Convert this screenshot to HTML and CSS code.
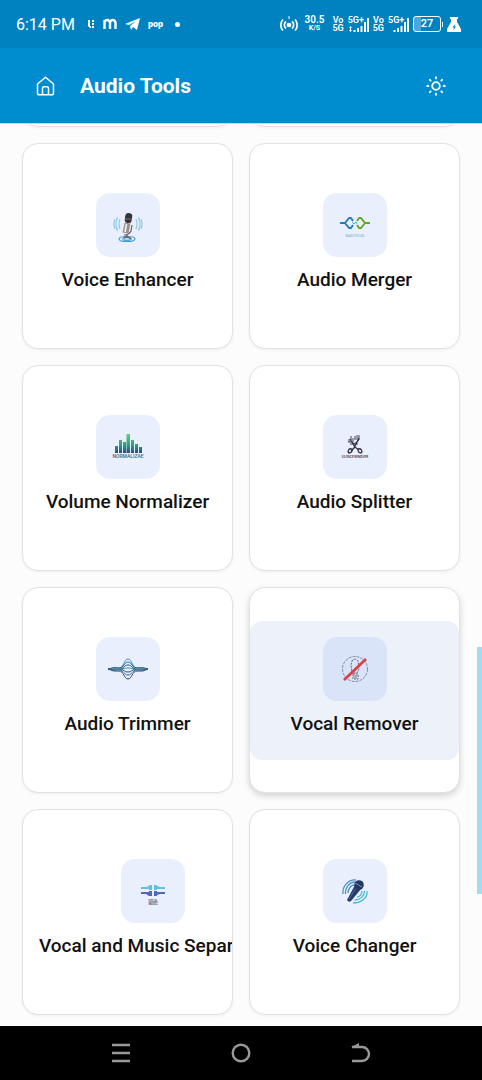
FILE: index.html
```html
<!DOCTYPE html>
<html lang="en">
<head>
    <meta charset="UTF-8">
    <meta name="viewport" content="width=device-width, initial-scale=1.0">
    <title>Audio Tools</title>
    <link rel="stylesheet" href="styles.css">
</head>
<body>
    <!-- Status bar -->
    <div class="status-bar">
        <div class="status-left">
            <span class="clock">6:14 PM</span>
            <svg class="status-icon" width="8" height="10" viewBox="0 0 8 10" fill="#fff">
                <path d="M1 1h2v6h1v2H3L1 7zM5 1h2v2H5zM5 4h2v2H5zM5 7h2v2H5z"/>
            </svg>
            <svg class="status-icon" width="14" height="12" viewBox="0 0 14 12" fill="none" stroke="#fff" stroke-width="2.4">
                <path d="M1.500 11V2M1.500 5a2.700 3 0 0 1 5.500 0v6M7 5a2.700 3 0 0 1 5.500 0v6"/>
            </svg>
            <svg class="status-icon" width="15" height="12" viewBox="0 0 15 12" fill="#fff">
                <path d="M0 6 15 0l-3 12-4-3-2 3-1-4 6-5-7 4z"/>
            </svg>
            <span class="pop">pop</span>
            <span class="dot"></span>
        </div>
        <div class="status-right">
            <svg width="18" height="16" viewBox="0 0 18 16" fill="none" stroke="#fff" stroke-width="1.7">
                <circle cx="9" cy="9" r="1.5" fill="#fff"/>
                <path d="M6 5.500a4.500 4.500 0 0 0 0 7M12 5.500a4.500 4.500 0 0 1 0 7M3 3.500a8 8 0 0 0 0 11M15 3.500a8 8 0 0 1 0 11"/>
                <path d="M9 0v3" stroke-width="1"/>
            </svg>
            <span class="stack speed"><b>30.5</b><small>K/S</small></span>
            <span class="stack"><b>Vo</b><b>5G</b></span>
            <span class="signal">
                <b>5G+</b>
                <svg width="21" height="14" viewBox="0 0 21 14" fill="#fff">
                    <path d="M1 10l1.500-2L4 10H3v2h1l-1.500 2L1 12h1v-2zM5.500 12h2v2h-2zM9 10h2v4H9zM12.500 8h2v6h-2zM16 4h2v10h-2zM19 0h2v14h-2z"/>
                </svg>
            </span>
            <span class="stack"><b>Vo</b><b>5G</b></span>
            <span class="signal">
                <b>5G+</b>
                <svg width="21" height="14" viewBox="0 0 21 14" fill="#fff">
                    <path d="M5.500 12h2v2h-2zM9 10h2v4H9zM12.500 8h2v6h-2zM16 4h2v10h-2zM19 0h2v14h-2z"/>
                </svg>
            </span>
            <span class="battery-wrap"><span class="battery">27</span><span class="battery-tip"></span></span>
            <svg width="14" height="15" viewBox="0 0 14 15">
                <path d="M3 0h8v2h-1v3l4 7v3H0v-3l4-7V2H3z" fill="#fff"/>
                <path d="M8 7 5.500 10.500H7L6.500 13 9 9.500H7.500z" fill="#0082c1"/>
            </svg>
        </div>
    </div>

    <!-- App header -->
    <header class="app-bar">
        <button class="icon-button" aria-label="Home">
            <svg width="20" height="20" viewBox="0 0 20 20" fill="none" stroke="#fff" stroke-width="1.5" stroke-linejoin="round">
                <path d="M1.500 8 9.500 1.200 17.500 8v9a1.800 1.800 0 0 1-1.800 1.800H3.300A1.800 1.800 0 0 1 1.500 17z"/>
                <path d="M6.500 18.500v-6.300A1.500 1.500 0 0 1 8 10.700h3a1.500 1.500 0 0 1 1.500 1.500v6.300"/>
            </svg>
        </button>
        <h1>Audio Tools</h1>
        <button class="icon-button theme-button" aria-label="Toggle theme">
            <svg width="20" height="20" viewBox="0 0 20 20" fill="none" stroke="#fff" stroke-width="1.8" stroke-linecap="round">
                <circle cx="10" cy="10" r="3.800"/>
                <path d="M10 1.200v1.200M10 17.600v1.200M1.200 10h1.200M17.600 10h1.200M3.800 3.800l.9.9M15.300 15.300l.9.9M3.800 16.200l.9-.9M15.300 4.700l.9-.9"/>
            </svg>
        </button>
    </header>

    <main>
        <div class="tool-grid">
            <div class="card"></div>
            <div class="card"></div>

            <div class="card">
                <button class="tool">
                    <span class="tool-icon">
                        <svg width="40" height="40" viewBox="0 0 40 40" fill="none">
                            <g stroke="#8cc8ea" stroke-width="1.200">
                                <path d="M12 14q-2 5 0 10M9.500 12q-3 7 0 14M7 14q-2 5 0 10M28 14q2 5 0 10M30.500 12q3 7 0 14M33 14q2 5 0 10"/>
                            </g>
                            <ellipse cx="19" cy="34" rx="8" ry="2.500" stroke="#3aa0d8" stroke-width="1.200"/>
                            <ellipse cx="19" cy="34" rx="4.500" ry="1.300" stroke="#2783bd"/>
                            <path d="m19.500 18-2 10" stroke="#9a8e8c" stroke-width="6"/>
                            <path d="m18.500 19-1.500 8" stroke="#eee8e6" stroke-width="1.800"/>
                            <path d="M24 20l-1 6q-2 4-7 4M19 29v4M16 33l3-2 4 3" stroke="#6b6266" stroke-width="1.200"/>
                            <rect x="17" y="8" width="7" height="10" rx="3" fill="#343237" transform="rotate(7 20 13)"/>
                            <path d="M17 14h7" stroke="#77767b"/>
                        </svg>
                    </span>
                    <span class="tool-name">Voice Enhancer</span>
                </button>
            </div>

            <div class="card">
                <button class="tool">
                    <span class="tool-icon">
                        <svg width="40" height="40" viewBox="0 0 40 40" fill="none" stroke-width="2" stroke-linejoin="round">
                            <path d="M5 18h5l4-5h2l2 3M10 18l4 5h2l2-3" stroke="#267cb7"/>
                            <path d="m17 17 2 2 2-2 1 2" stroke="#41b7ad" stroke-width="1"/>
                            <path d="m22 16 2-3h2l4 5h5M22 20l2 3h2l4-5" stroke="#63a829"/>
                            <text class="mark mark-blue" x="20" y="32" text-anchor="middle">NAUTILUS</text>
                        </svg>
                    </span>
                    <span class="tool-name">Audio Merger</span>
                </button>
            </div>

            <div class="card">
                <button class="tool">
                    <span class="tool-icon">
                        <svg width="40" height="40" viewBox="0 0 40 40">
                            <defs>
                                <linearGradient id="levels" x1="0" y1="7" x2="0" y2="26" gradientUnits="userSpaceOnUse">
                                    <stop offset="0" stop-color="#65cf75"/>
                                    <stop offset="0.600" stop-color="#2d9b83"/>
                                    <stop offset="1" stop-color="#294a8e"/>
                                </linearGradient>
                            </defs>
                            <path d="M7 19h3v7H7zM11 13h3v13h-3zM15 15h3v11h-3zM18.500 7h3.500v19h-3.500zM23 13h3v13h-3zM27 17h3v9h-3zM31 20h3v6h-3z" fill="url(#levels)"/>
                            <text class="mark mark-teal" x="20" y="31" text-anchor="middle">NORMALIZAE</text>
                        </svg>
                    </span>
                    <span class="tool-name">Volume Normalizer</span>
                </button>
            </div>

            <div class="card">
                <button class="tool">
                    <span class="tool-icon">
                        <svg width="40" height="40" viewBox="0 0 40 40" fill="none" stroke="#343440">
                            <path d="m15 12 5 8 4 3M24 11l-5 10-3 3" stroke-width="1.300"/>
                            <path d="M14 12v3M16 9v4M18 11v5M20 9v4M22 8v5M24 8v5M13 15h4l2 2 5-4M15 17h8" stroke-width="0.900"/>
                            <path d="M17 22c-3-1-5 2-3 4 2 0 4-2 3-4zM23 22c3-1 5 2 3 4-2 0-3-2-3-4z" stroke-width="1.300"/>
                            <text class="mark mark-dark" x="20" y="31" text-anchor="middle">SILENCE REMOVER</text>
                        </svg>
                    </span>
                    <span class="tool-name">Audio Splitter</span>
                </button>
            </div>

            <div class="card">
                <button class="tool">
                    <span class="tool-icon">
                        <svg width="40" height="40" viewBox="0 0 40 40" fill="none" stroke-width="1">
                            <path d="M0 20q6-2 11-1c5 0 5-9 9-9s4 9 9 9q6-1 11 1" stroke="#368bb5"/>
                            <path d="M0 20q6-2 11-1c5 0 5-6 9-6s4 6 9 6q6-1 11 1" stroke="#286a94"/>
                            <path d="M0 20h11c5 0 5-4 9-4s4 4 9 4h11" stroke="#264f78"/>
                            <path d="M0 20h11c5 0 5-1 9-1s4 1 9 1h11" stroke="#3d84aa"/>
                            <path d="M0 20h11c5 0 5 3 9 3s4-3 9-3h11" stroke="#264f78"/>
                            <path d="M0 20q6 2 11 1c5 0 5 5 9 5s4-5 9-5q6 1 11-1" stroke="#286a94"/>
                            <path d="M0 20q6 3 11 2c5 0 5 8 9 8s4-8 9-8q6 1 11-2" stroke="#334763"/>
                            <path d="m1 20 9-2 4 2-4 2zM39 20l-9-2-4 2 4 2z" fill="#5282a2"/>
                        </svg>
                    </span>
                    <span class="tool-name">Audio Trimmer</span>
                </button>
            </div>

            <div class="card card-active">
                <button class="tool">
                    <span class="tool-icon">
                        <svg width="40" height="40" viewBox="0 0 40 40" fill="none">
                            <circle cx="20" cy="20" r="12.500" stroke="#6d7590" stroke-width="0.800" stroke-dasharray="3 1"/>
                            <path d="M17 12q3-4 6 0l1 8-2 4h-5l-1-8zM18 25h5v5h-5z" stroke="#656b84" stroke-dasharray="2 1"/>
                            <path d="M18 26h4v4h-4z" fill="#a9adb9"/>
                            <path d="M9 31 31 10" stroke="#dd3d43" stroke-width="2.700"/>
                        </svg>
                    </span>
                    <span class="tool-name">Vocal Remover</span>
                </button>
            </div>

            <div class="card">
                <button class="tool">
                    <span class="tool-icon">
                        <svg width="40" height="40" viewBox="0 0 40 40">
                            <path d="M8 16h5l3-1v-1h3v5h-3v-1H8zM21 14h3v1l3 1h5v2h-8v1h-3z" fill="#65bfe5"/>
                            <path d="M8 21h8v-1h3v5h-3l-3-2H8zM21 20h3v1h8v2h-5l-3 1v1h-3z" fill="#5268bb"/>
                            <text class="mark mark-navy" x="20" y="31" text-anchor="middle">VOCAL</text>
                            <text class="mark mark-navy" x="20" y="34" text-anchor="middle">MUSIC</text>
                        </svg>
                    </span>
                    <span class="tool-name">Vocal and Music Separator</span>
                </button>
            </div>

            <div class="card">
                <button class="tool">
                    <span class="tool-icon">
                        <svg width="40" height="40" viewBox="0 0 40 40" fill="none">
                            <path d="M8 23C7 15 14 8 21 9M10.500 23C10 16 15 11 20 11M13 22c0-4 3-8 6-8" stroke="#4f91c4" stroke-width="1.300"/>
                            <path d="M32 20c1 6-5 12-14 12M29.500 20c0 5-4 9-10 9M27 20c0 3-2 6-5 6" stroke="#4dbbd1" stroke-width="1.300"/>
                            <path d="m20 14 6 4-10 12q-2 2-4-1z" fill="#263b67"/>
                            <path d="m21 17-7 11" stroke="#47699e"/>
                            <circle cx="24" cy="14" r="4.800" fill="#203862"/>
                            <path d="m20 12 7 4" stroke="#7291bc"/>
                        </svg>
                    </span>
                    <span class="tool-name">Voice Changer</span>
                </button>
            </div>
        </div>
        <div class="scroll-thumb"></div>
    </main>

    <!-- System navigation -->
    <nav class="nav-bar">
        <button aria-label="Recent apps">
            <svg width="20" height="20" viewBox="0 0 20 20" fill="none" stroke="#999" stroke-width="2.400">
                <path d="M1 2h18M1 10h18M1 18h18"/>
            </svg>
        </button>
        <button aria-label="Home screen">
            <svg width="20" height="20" viewBox="0 0 20 20" fill="none" stroke="#999" stroke-width="2.400">
                <circle cx="10" cy="10" r="8.300"/>
            </svg>
        </button>
        <button aria-label="Back">
            <svg width="20" height="20" viewBox="0 0 20 20" fill="none" stroke="#999" stroke-width="2.400">
                <path d="M1 4h10a7 7 0 0 1 0 14H1"/>
                <path d="M0 4 8 0v4z" fill="#999" stroke="none"/>
            </svg>
        </button>
    </nav>
</body>
</html>
```
FILE: styles.css
```css
* {
    box-sizing: border-box;
}

body {
    margin: 0;
    height: 100vh;
    display: flex;
    flex-direction: column;
    background: #fcfcfc;
    color: #111;
    font-family: Roboto, sans-serif;
    overflow: hidden;
}

button {
    padding: 0;
    border: none;
    background: none;
    color: inherit;
    font: inherit;
    cursor: pointer;
}

svg {
    display: block;
    flex: none;
}

/* Status bar */
.status-bar {
    flex: none;
    height: 48px;
    padding: 0 21px 0 16px;
    display: flex;
    align-items: center;
    justify-content: space-between;
    background: #0082c1;
    color: #fff;
}

.status-left,
.status-right {
    display: flex;
    align-items: center;
}

.status-left {
    gap: 8px;
}

.clock {
    margin-right: 4px;
    font-size: 16px;
}

.pop {
    font-size: 9px;
    font-weight: 900;
    line-height: 12px;
}

.dot {
    width: 5px;
    height: 5px;
    margin-left: 4px;
    border-radius: 50%;
    background: #fff;
}

.status-right {
    gap: 4px;
}

.stack {
    display: flex;
    flex-direction: column;
    align-items: center;
    font-size: 9px;
    line-height: 8px;
}

.stack b,
.signal b {
    font-weight: 600;
}

.speed {
    margin: 0 4px 0 2px;
    font-size: 10px;
}

.speed small {
    font-size: 7px;
    font-weight: 700;
}

.signal {
    display: grid;
    align-items: end;
    height: 16px;
}

.signal b,
.signal svg {
    grid-area: 1 / 1;
}

.signal b {
    align-self: start;
    font-size: 9px;
    line-height: 8px;
}

.battery-wrap {
    display: flex;
    align-items: center;
    gap: 1px;
}

.battery {
    width: 28px;
    height: 16px;
    border: 1px solid #fff;
    border-radius: 3px;
    background: linear-gradient(to right, #4ba8dc 27%, transparent 27%);
    font-size: 11px;
    font-weight: 600;
    line-height: 14px;
    text-align: center;
}

.battery-tip {
    width: 1px;
    height: 5px;
    background: #fff;
}

/* App header */
.app-bar {
    flex: none;
    height: 76px;
    padding: 0 36px;
    display: flex;
    align-items: center;
    background: #008dd0;
    border-bottom: 1px solid #b9dcf0;
    color: #fff;
}

.app-bar h1 {
    margin: 0 0 0 24px;
    font-size: 21px;
    font-weight: 700;
    line-height: 28px;
}

.theme-button {
    margin-left: auto;
}

/* Tool grid, scrolled to its end */
main {
    position: relative;
    flex: 1;
    min-height: 0;
    padding: 0 22px 11px;
    display: flex;
    flex-direction: column;
    justify-content: flex-end;
    overflow: hidden;
}

.tool-grid {
    display: grid;
    grid-template-columns: repeat(2, minmax(0, 1fr));
    grid-auto-rows: 206px;
    gap: 16px;
}

.card {
    display: flex;
    align-items: center;
    overflow: hidden;
    background: #fff;
    border: 1px solid #e2e2e4;
    border-radius: 16px;
    box-shadow: 0 1px 3px rgba(0, 0, 0, 0.06);
}

.tool {
    flex: none;
    min-width: 100%;
    padding: 16px 16px 22px;
    display: flex;
    flex-direction: column;
    align-items: center;
    border-radius: 12px;
}

.tool-icon {
    width: 64px;
    height: 64px;
    display: flex;
    align-items: center;
    justify-content: center;
    background: #e9effd;
    border-radius: 14px;
}

.tool-name {
    margin-top: 9px;
    font-size: 19px;
    font-weight: 500;
    line-height: 28px;
    white-space: nowrap;
}

.card-active {
    box-shadow: 0 3px 6px rgba(0, 0, 0, 0.16);
}

.card-active .tool {
    background: #edf2fa;
}

.card-active .tool-icon {
    background: #dae4f8;
}

/* Small wordmarks under the icons */
.mark {
    font-family: Roboto, sans-serif;
    font-size: 4px;
    font-weight: 500;
    stroke: none;
}

.mark-blue {
    fill: #83b4d5;
}

.mark-teal {
    font-size: 5px;
    fill: #356c7d;
}

.mark-dark {
    font-size: 3px;
    fill: #33333f;
}

.mark-navy {
    font-size: 3px;
    fill: #303c66;
}

.scroll-thumb {
    position: absolute;
    top: 58%;
    right: 0;
    width: 5px;
    height: 247px;
    background: #a3dcf0;
}

/* System navigation */
.nav-bar {
    flex: none;
    height: 54px;
    display: flex;
    align-items: center;
    justify-content: center;
    gap: 100px;
    background: #000;
}
```
